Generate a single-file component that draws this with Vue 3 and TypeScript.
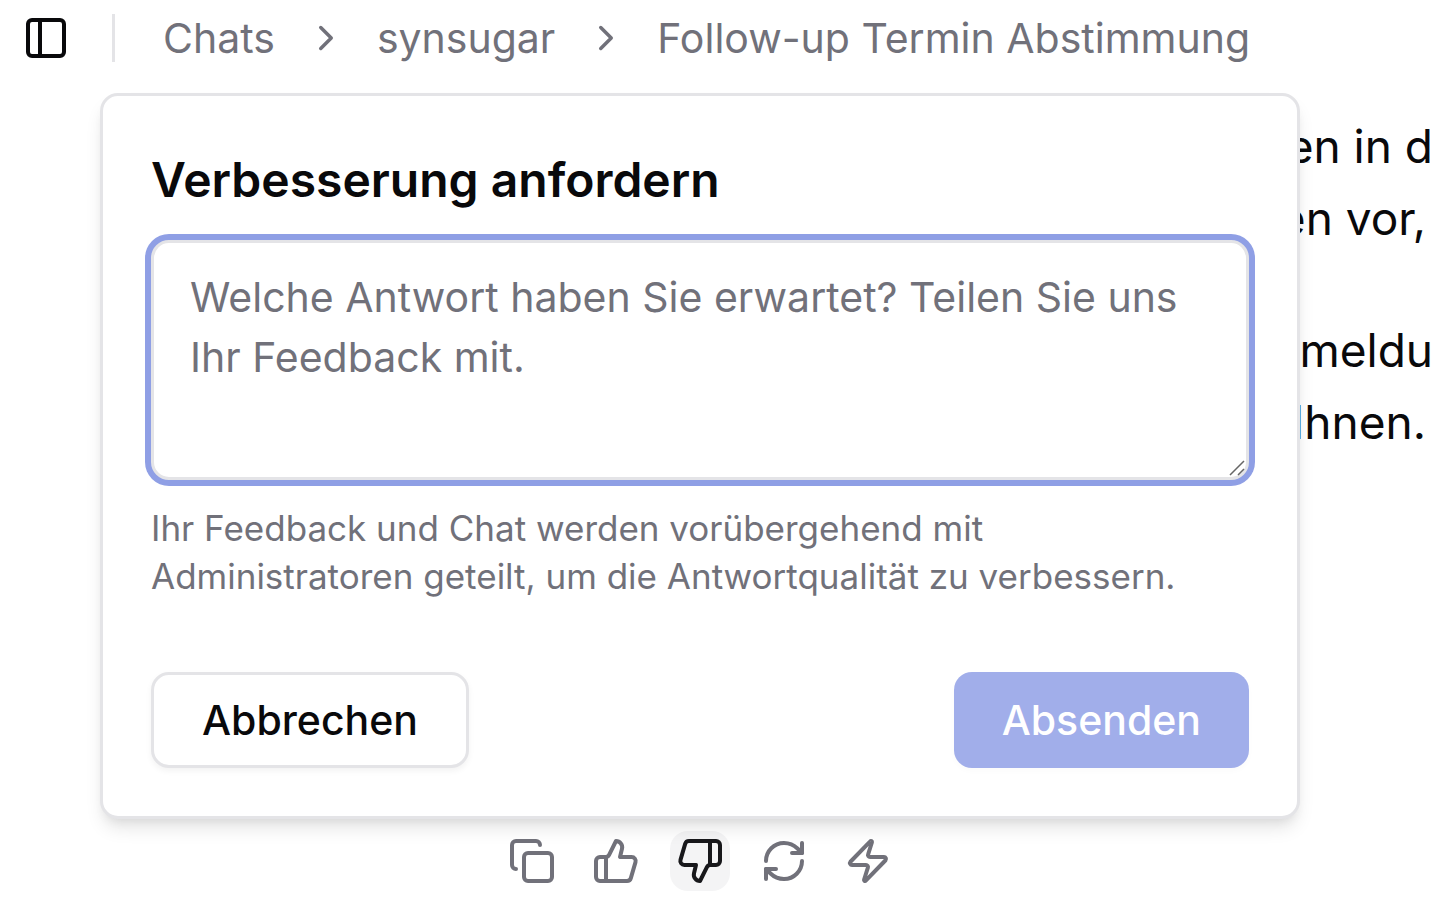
<script setup lang="ts">
import { ref } from 'vue'

interface Action {
  label: string
  paths: string[]
  active?: boolean
}

interface Line {
  text: string
  short?: boolean
}

const feedback = ref('')

const crumbs: string[] = ['Chats', 'synsugar', 'Follow-up Termin Abstimmung']

const paragraphs: Line[][] = [
  [{ text: 'en in d' }, { text: 'en vor,', short: true }],
  [{ text: 'meldu' }, { text: 'Ihnen.', short: true }],
]

const actions: Action[] = [
  {
    label: 'Kopieren',
    paths: [
      'M10 8h10a2 2 0 0 1 2 2v10a2 2 0 0 1-2 2H10a2 2 0 0 1-2-2V10a2 2 0 0 1 2-2z',
      'M4 16c-1.1 0-2-.9-2-2V4c0-1.1.9-2 2-2h10c1.1 0 2 .9 2 2',
    ],
  },
  {
    label: 'Gute Antwort',
    paths: [
      'M7 10v12',
      'M15 5.88 14 10h5.83a2 2 0 0 1 1.92 2.56l-2.33 8A2 2 0 0 1 17.5 22H4a2 2 0 0 1-2-2v-8a2 2 0 0 1 2-2h2.76a2 2 0 0 0 1.79-1.11L12 2a3.13 3.13 0 0 1 3 3.88Z',
    ],
  },
  {
    label: 'Schlechte Antwort',
    active: true,
    paths: [
      'M17 14V2',
      'M9 18.12 10 14H4.17a2 2 0 0 1-1.92-2.56l2.33-8A2 2 0 0 1 6.5 2H20a2 2 0 0 1 2 2v8a2 2 0 0 1-2 2h-2.76a2 2 0 0 0-1.79 1.11L12 22a3.13 3.13 0 0 1-3-3.88Z',
    ],
  },
  {
    label: 'Neu generieren',
    paths: [
      'M3 12a9 9 0 0 1 9-9 9.75 9.75 0 0 1 6.74 2.74L21 8',
      'M21 3v5h-5',
      'M21 12a9 9 0 0 1-9 9 9.75 9.75 0 0 1-6.74-2.74L3 16',
      'M8 16H3v5',
    ],
  },
  {
    label: 'Schnellaktion',
    paths: [
      'M4 14a1 1 0 0 1-.78-1.63l9.9-10.2a.5.5 0 0 1 .86.46l-1.92 6.02A1 1 0 0 0 13 10h7a1 1 0 0 1 .78 1.63l-9.9 10.2a.5.5 0 0 1-.86-.46l1.92-6.02A1 1 0 0 0 11 14z',
    ],
  },
]
</script>

<template>
  <div class="page">
    <header class="topbar">
      <button class="icon-button sidebar-toggle" type="button" aria-label="Seitenleiste umschalten">
        <svg class="icon" viewBox="0 0 24 24" aria-hidden="true">
          <rect x="3" y="3" width="18" height="18" rx="2" />
          <path d="M9 3v18" />
        </svg>
      </button>
      <span class="divider"></span>
      <nav class="crumbs" aria-label="Breadcrumb">
        <template v-for="(crumb, i) in crumbs" :key="crumb">
          <svg v-if="i > 0" class="icon chevron" viewBox="0 0 24 24" aria-hidden="true">
            <path d="m9 18 6-6-6-6" />
          </svg>
          <a href="#" class="crumb">{{ crumb }}</a>
        </template>
      </nav>
    </header>

    <main class="stage">
      <article class="message">
        <p v-for="(lines, i) in paragraphs" :key="i" class="paragraph">
          <span
            v-for="line in lines"
            :key="line.text"
            class="line"
            :class="{ short: line.short }"
          >{{ line.text }}</span>
        </p>
      </article>

      <form class="dialog" role="dialog" aria-labelledby="dialog-title" @submit.prevent>
        <h2 id="dialog-title" class="title">
          <label for="feedback">Verbesserung anfordern</label>
        </h2>
        <div class="field">
          <textarea
            id="feedback"
            v-model="feedback"
            class="textarea"
            aria-describedby="feedback-hint"
            placeholder="Welche Antwort haben Sie erwartet? Teilen Sie uns Ihr Feedback mit."
          ></textarea>
          <svg class="grip" viewBox="0 0 16 16" aria-hidden="true">
            <path d="M1 15 15 1M9 15l6-6" />
          </svg>
        </div>
        <p id="feedback-hint" class="hint">
          Ihr Feedback und Chat werden vorübergehend mit Administratoren geteilt, um die
          Antwortqualität zu verbessern.
        </p>
        <div class="buttons">
          <button class="button cancel" type="button">Abbrechen</button>
          <button class="button submit" type="submit" :disabled="!feedback">Absenden</button>
        </div>
      </form>
    </main>

    <div class="actions" role="toolbar" aria-label="Nachrichtenaktionen">
      <button
        v-for="action in actions"
        :key="action.label"
        type="button"
        class="icon-button action"
        :class="{ active: action.active }"
        :aria-label="action.label"
      >
        <svg class="icon" viewBox="0 0 24 24" aria-hidden="true">
          <path v-for="d in action.paths" :key="d" :d="d" />
        </svg>
      </button>
    </div>
  </div>
</template>

<style>
body {
  margin: 0;
  background: #fff;
}
</style>

<style scoped>
.page {
  min-height: 100vh;
  box-sizing: border-box;
  overflow: hidden;
  background: #fff;
  color: #09090b;
  font-family: Inter, 'Liberation Sans', sans-serif;
}

.icon {
  display: block;
  width: 48px;
  height: 48px;
  flex: none;
  fill: none;
  stroke: currentColor;
  stroke-width: 2;
  stroke-linecap: round;
  stroke-linejoin: round;
}

.icon-button {
  display: flex;
  align-items: center;
  justify-content: center;
  padding: 0;
  border: 0;
  background: none;
  color: inherit;
}

.topbar {
  display: flex;
  align-items: center;
  height: 48px;
  padding: 14px 22px 31px;
}

.divider {
  width: 3px;
  height: 48px;
  margin: 0 48px 0 42px;
  background: #e4e4e7;
}

.crumbs {
  display: flex;
  align-items: center;
  gap: 30px;
  color: #71717a;
  font-size: 41px;
  line-height: 48px;
  white-space: nowrap;
}

.crumb {
  color: inherit;
  text-decoration: none;
}

.chevron {
  width: 42px;
  height: 42px;
}

.stage {
  display: grid;
  grid-template-columns: minmax(0, 1fr);
}

.message {
  grid-area: 1 / 1;
  padding: 17px 1px 0 0;
  font-size: 46px;
  line-height: 72px;
  text-align: right;
}

.paragraph {
  margin: 0 0 60px;
}

.line {
  display: block;
}

.line.short {
  padding-right: 7px;
}

.dialog {
  position: relative;
  z-index: 1;
  grid-area: 1 / 1;
  box-sizing: border-box;
  margin: 0 134px 0 100px;
  padding: 48px;
  border: 3px solid #e4e4e7;
  border-radius: 18px;
  background: #fff;
  box-shadow:
    0 12px 18px -3px rgba(0, 0, 0, 0.1),
    0 6px 12px -6px rgba(0, 0, 0, 0.1);
}

.title {
  margin: 0 0 24px;
  font-size: 48px;
  font-weight: 600;
  line-height: 72px;
}

.field {
  position: relative;
}

.textarea {
  display: block;
  box-sizing: border-box;
  width: 100%;
  height: 240px;
  padding: 24px 36px;
  border: 3px solid #e4e4e7;
  border-radius: 18px;
  outline: none;
  background: #fff;
  box-shadow: 0 0 0 6px #8f9fe5;
  color: inherit;
  font: inherit;
  font-size: 41px;
  line-height: 60px;
  resize: none;
}

.textarea::placeholder {
  color: #71717a;
  opacity: 1;
}

.grip {
  position: absolute;
  right: 4px;
  bottom: 4px;
  width: 16px;
  height: 16px;
  fill: none;
  stroke: #666;
  stroke-width: 1.5;
}

.hint {
  margin: 24px 0 72px;
  color: #71717a;
  font-size: 35px;
  line-height: 48px;
}

.buttons {
  display: flex;
  justify-content: space-between;
}

.button {
  box-sizing: border-box;
  height: 96px;
  padding: 0 48px;
  border: 0;
  border-radius: 18px;
  font: inherit;
  font-size: 41px;
  font-weight: 500;
  line-height: 60px;
  box-shadow: 0 3px 6px rgba(0, 0, 0, 0.05);
}

.cancel {
  border: 3px solid #e4e4e7;
  background: #fff;
  color: #09090b;
}

.submit {
  background: #a1aeea;
  color: #fff;
  box-shadow: 0 3px 6px rgba(0, 0, 0, 0.02);
}

.actions {
  display: flex;
  justify-content: center;
  gap: 24px;
  margin: 12px 134px 0 100px;
  color: #71717a;
}

.action {
  width: 60px;
  height: 60px;
  border-radius: 18px;
}

.action.active {
  background: #f4f4f5;
  color: #18181b;
}
</style>
